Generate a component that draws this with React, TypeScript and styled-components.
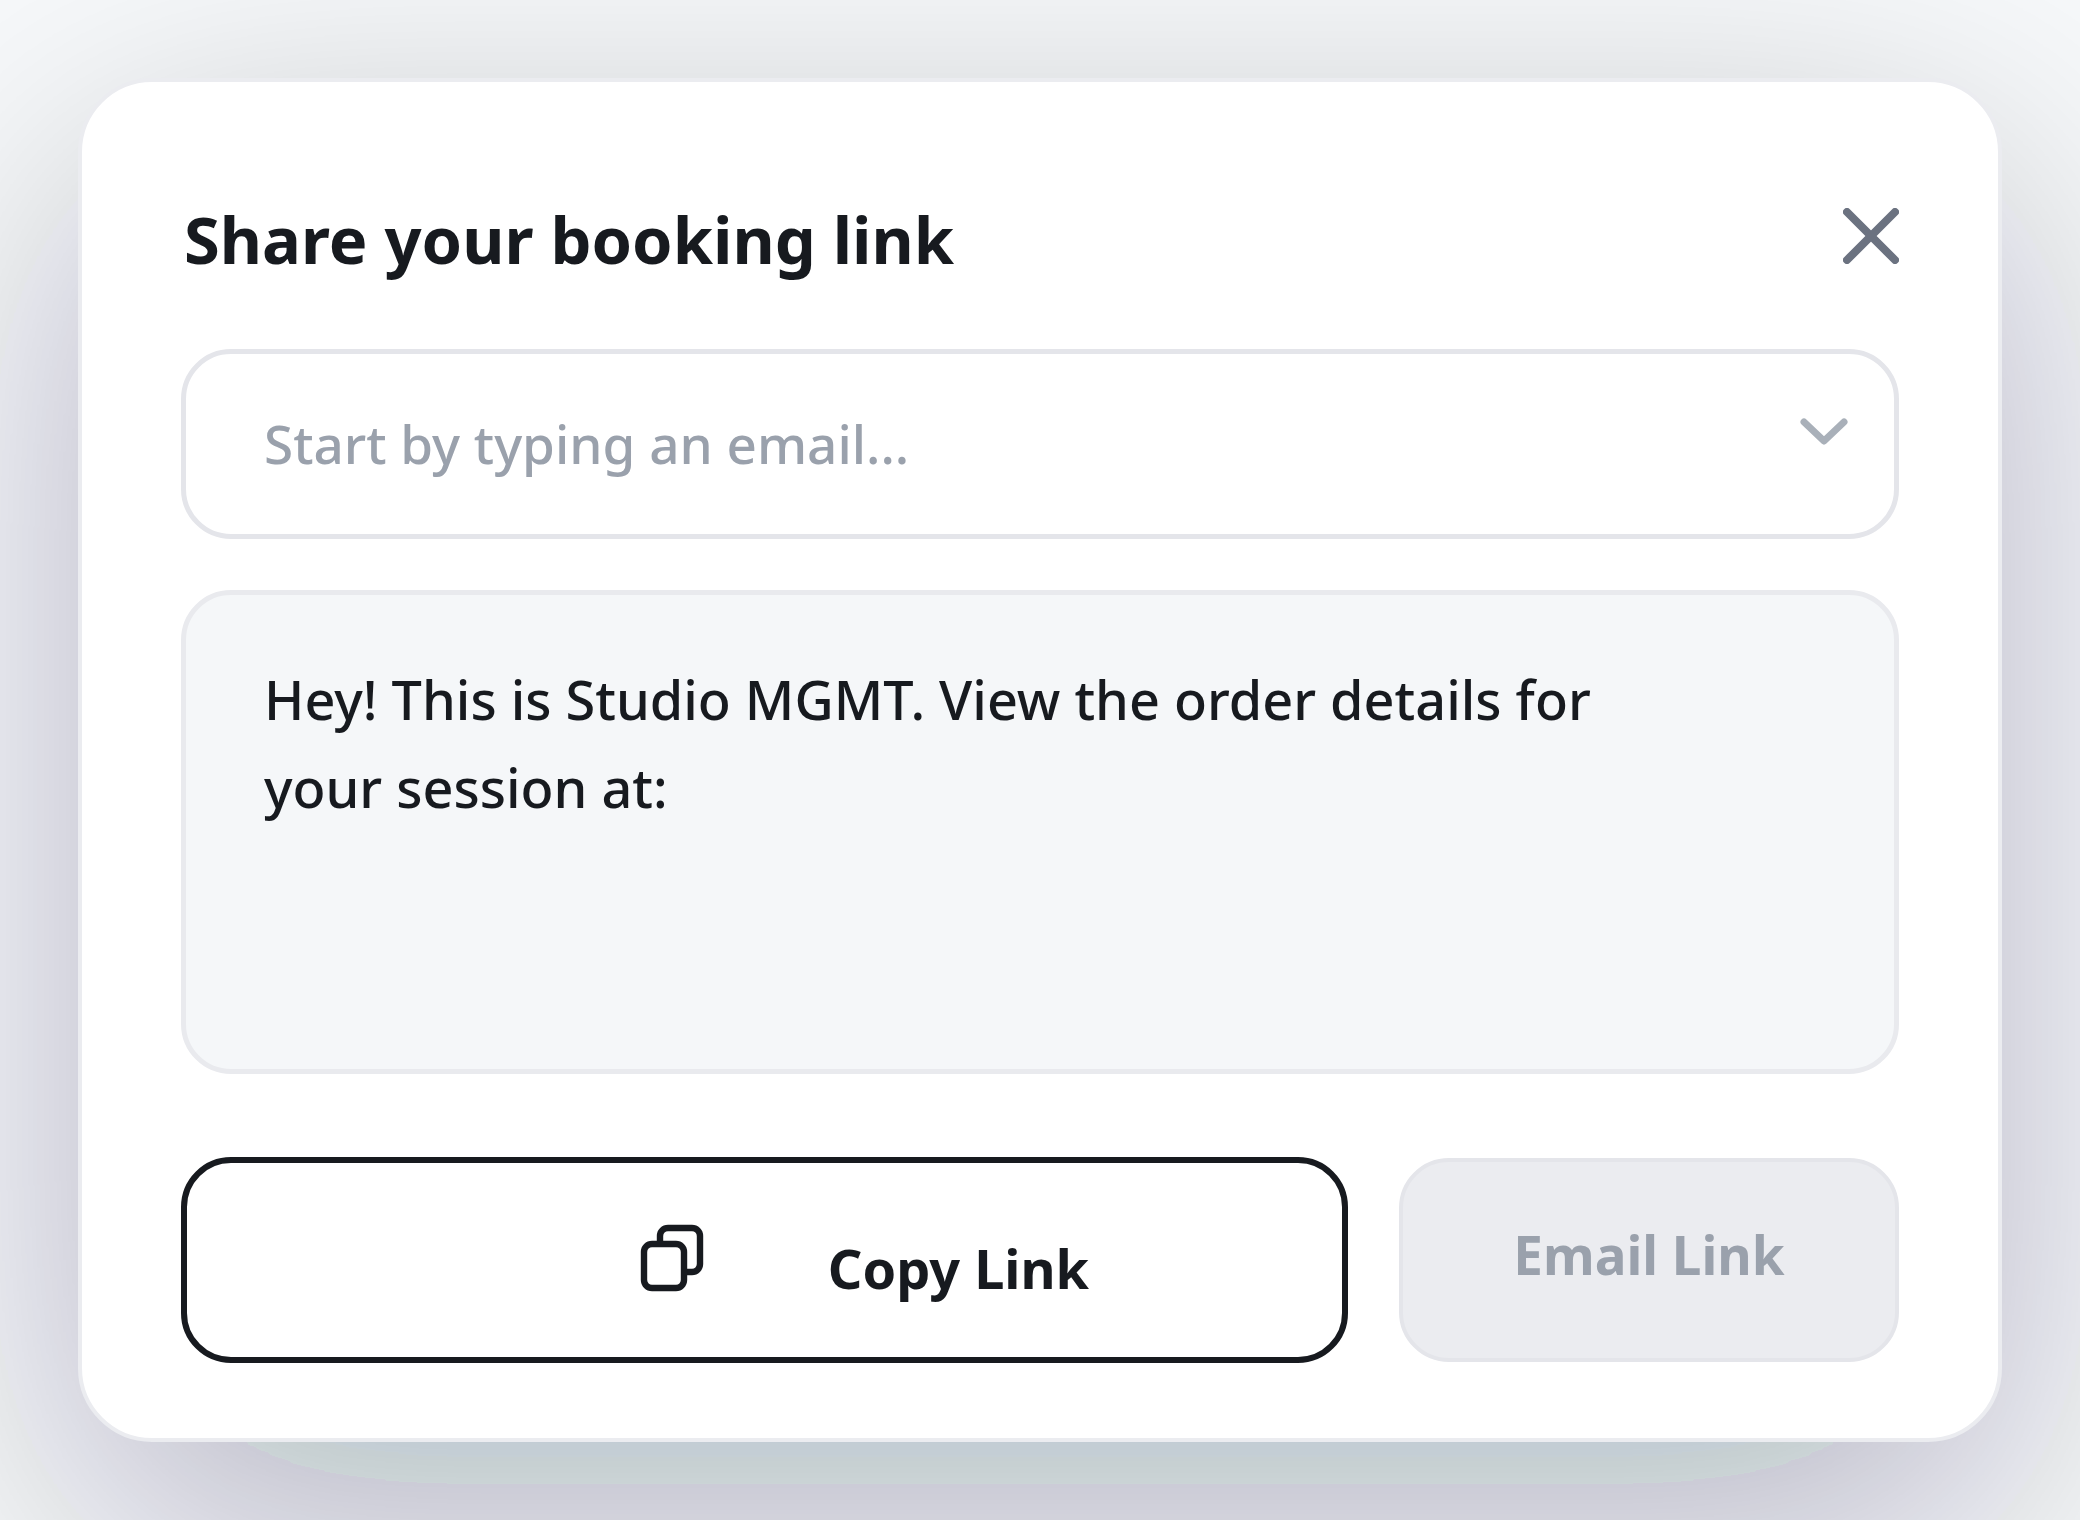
import React from 'react';
import styled, { createGlobalStyle } from 'styled-components';

const GlobalStyle = createGlobalStyle`
  *, *::before, *::after { box-sizing: border-box; }
  body {
    margin: 0;
    background: #f7f9fb;
    font-family: "Noto Sans", "Open Sans", sans-serif;
    color: #171a1f;
  }
  button, input, textarea { font: inherit; color: inherit; margin: 0; }
`;

const Page = styled.main`
  isolation: isolate;
  min-height: 100vh;
  padding: 78px;
  overflow: hidden;
  display: flex;
`;

const FilterDefs = styled.svg`
  position: absolute;
  width: 0;
  height: 0;
`;

const Dialog = styled.section`
  position: relative;
  flex: 1;
  display: flex;
  flex-direction: column;
  padding: 99px 99px 75px;
  background: #ffffff;
  border: 4px solid #ebecf0;
  border-radius: 74px;

  &::before {
    content: "";
    position: absolute;
    z-index: -1;
    inset: -2px;
    border-radius: 72px;
    background: #000000;
    filter: url(#dialog-shadow);
  }
`;

const Header = styled.header`
  display: flex;
  justify-content: space-between;
  align-items: flex-start;
  height: 168px;
`;

const Title = styled.h1`
  margin: 0;
  padding: 12px 0 0 3px;
  font-size: 65px;
  line-height: 92px;
  font-weight: 700;
`;

const CloseButton = styled.button`
  display: flex;
  padding: 27px 0;
  border: 0;
  background: none;
  color: #6b7280;
`;

const EmailField = styled.label`
  display: flex;
  align-items: center;
  height: 190px;
  padding: 0 46px 0 78px;
  border: 5px solid #e4e5ea;
  border-radius: 50px;
`;

const EmailInput = styled.input`
  flex: 1;
  min-width: 0;
  padding: 0;
  border: 0;
  outline: 0;
  background: none;
  font-size: 53px;
  line-height: 88px;
  font-weight: 500;
  &::placeholder { color: #9aa1ac; opacity: 1; }
`;

const Chevron = styled.svg`
  width: 48px;
  height: 28px;
  margin-bottom: 24px;
`;

const Message = styled.textarea`
  display: block;
  width: 100%;
  height: 484px;
  margin-top: 51px;
  padding: 60px 200px 60px 78px;
  border: 5px solid #e9eaee;
  border-radius: 50px;
  outline: 0;
  resize: none;
  background: #f5f7f9;
  font-size: 54px;
  line-height: 88px;
  font-weight: 500;
`;

const Actions = styled.div`
  display: grid;
  grid-template-columns: 7fr 3fr;
  gap: 51px;
  margin-top: 83px;
  height: 206px;
`;

const ActionButton = styled.button`
  display: flex;
  align-items: center;
  justify-content: center;
  border-radius: 50px;
  line-height: 88px;
  font-weight: 700;
`;

const CopyButton = styled(ActionButton)`
  gap: 124px;
  padding: 0 0 0 200px;
  border: 6px solid #171a1f;
  background: #ffffff;
  color: #171a1f;
  font-size: 54px;
`;

const EmailButton = styled(ActionButton)`
  height: 204px;
  align-self: center;
  padding: 0 0 10px;
  border: 4px solid #e4e5ea;
  background: #ebecf0;
  color: #9aa1ac;
  font-size: 53px;
`;

const CopyLabel = styled.span`
  padding-top: 16px;
`;

const CopyGlyph = styled.svg`
  width: 64px;
  height: 68px;
  margin-bottom: 4px;
`;

const CloseIcon = () => (
  <svg width="56" height="56" viewBox="0 0 56 56" fill="none" stroke="currentColor" strokeWidth="8" strokeLinecap="round" aria-hidden="true">
    <path d="M4 4 52 52M52 4 4 52" />
  </svg>
);

const ChevronIcon = () => (
  <Chevron viewBox="0 0 48 28" fill="none" stroke="#a9b0b9" strokeWidth="7" strokeLinecap="round" strokeLinejoin="round" aria-hidden="true">
    <path d="M4 4 24 23 44 4" />
  </Chevron>
);

const CopyIcon = () => (
  <CopyGlyph viewBox="0 0 64 68" fill="none" stroke="currentColor" strokeWidth="6.4" aria-hidden="true">
    <path d="M20 20V12a8 8 0 0 1 8-8h24a8 8 0 0 1 8 8v28a8 8 0 0 1-8 8h-8" />
    <rect x="4" y="20" width="40" height="44" rx="8" />
  </CopyGlyph>
);

// Tints of the shadow, each starting where its density passes start / steps.
const shadowTints = [
  { name: 'violet', color: '#0a0036', start: 15, steps: 56 },
  { name: 'green', color: '#042a30', start: 19, steps: 30 },
  { name: 'blue', color: '#022640', start: 7, steps: 10 },
];

const stepTable = (start: number, steps: number) =>
  Array.from({ length: steps }, (_, i) => (i < start ? 0 : 1)).join(' ');

const ShadowFilter = () => (
  <FilterDefs aria-hidden="true">
    <filter id="dialog-shadow" x="-30%" y="-40%" width="160%" height="190%" colorInterpolationFilters="sRGB">
      <feGaussianBlur in="SourceAlpha" stdDeviation="152" />
      <feOffset dy="96" result="density" />
      <feFlood floodColor="#000000" result="base" />
      {shadowTints.map((tint) => (
        <React.Fragment key={tint.name}>
          <feComponentTransfer in="density" result={`${tint.name}-area`}>
            <feFuncA type="discrete" tableValues={stepTable(tint.start, tint.steps)} />
          </feComponentTransfer>
          <feFlood floodColor={tint.color} result={`${tint.name}-flood`} />
          <feComposite in={`${tint.name}-flood`} in2={`${tint.name}-area`} operator="in" result={tint.name} />
        </React.Fragment>
      ))}
      <feMerge result="colors">
        <feMergeNode in="base" />
        {shadowTints.map((tint) => (
          <feMergeNode key={tint.name} in={tint.name} />
        ))}
      </feMerge>
      <feComponentTransfer in="density" result="shade">
        <feFuncA type="linear" slope="0.29" />
      </feComponentTransfer>
      <feComposite in="colors" in2="shade" operator="in" />
    </filter>
  </FilterDefs>
);

export default function App() {
  return (
    <>
      <GlobalStyle />
      <ShadowFilter />
      <Page>
        <Dialog role="dialog" aria-labelledby="share-title">
          <Header>
            <Title id="share-title">Share your booking link</Title>
            <CloseButton type="button" aria-label="Close"><CloseIcon /></CloseButton>
          </Header>
          <EmailField>
            <EmailInput type="email" aria-label="Email" placeholder="Start by typing an email..." />
            <ChevronIcon />
          </EmailField>
          <Message
            aria-label="Message"
            spellCheck={false}
            defaultValue="Hey! This is Studio MGMT. View the order details for your session at:"
          />
          <Actions>
            <CopyButton type="button">
              <CopyIcon />
              <CopyLabel>Copy Link</CopyLabel>
            </CopyButton>
            <EmailButton type="button" disabled>Email Link</EmailButton>
          </Actions>
        </Dialog>
      </Page>
    </>
  );
}
